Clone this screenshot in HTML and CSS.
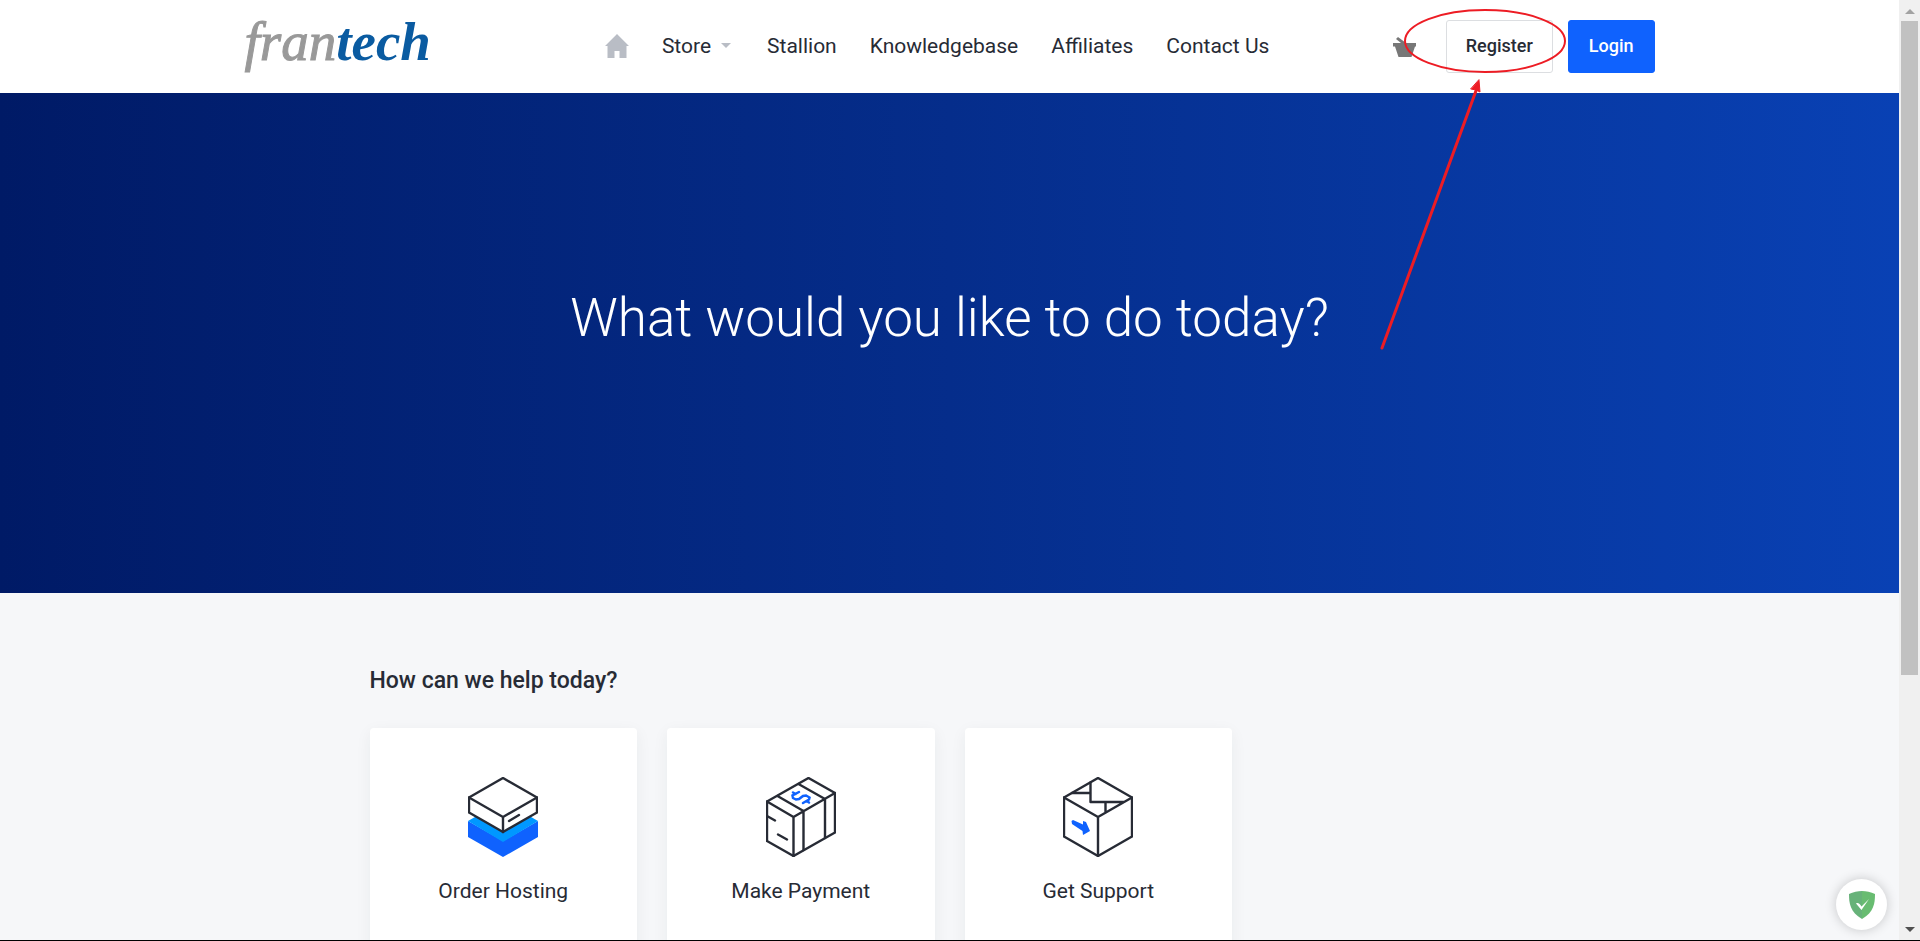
FILE: index.html
```html
<!DOCTYPE html>
<html lang="en">
<head>
<meta charset="utf-8">
<title>Frantech - Client Area</title>
<link rel="stylesheet" href="styles.css">
</head>
<body>
<div class="viewport">
  <div class="page">
    <header class="header">
      <div class="container header-row">
        <a class="logo" href="#"><span class="logo-first">fran</span><span class="logo-last">tech</span></a>
        <nav class="nav">
          <a class="nav-home" href="#" aria-label="Home">
            <svg class="icon-home" viewBox="0 0 24 24"><path d="M12 0 L24 12 H21.500 V24 H14.500 V17 H9.500 V24 H2.500 V12 H0 Z"/></svg>
          </a>
          <a class="nav-link" href="#">Store<span class="caret"></span></a>
          <a class="nav-link" href="#">Stallion</a>
          <a class="nav-link" href="#">Knowledgebase</a>
          <a class="nav-link" href="#">Affiliates</a>
          <a class="nav-link" href="#">Contact Us</a>
        </nav>
        <div class="actions">
          <a class="cart" href="#" aria-label="Cart">
            <svg class="icon-cart" viewBox="0 0 24 20"><path d="M5 0 L13 6 H23 V9.500 H22 L18.500 20 H5.500 L2 9.500 H0 V6 H8 L3 2 Z"/></svg>
          </a>
          <button class="btn btn-outline" type="button">Register</button>
          <button class="btn btn-primary" type="button">Login</button>
        </div>
      </div>
    </header>

    <section class="hero">
      <h1 class="hero-title">What would you like to do today?</h1>
    </section>

    <main class="help">
      <h2 class="help-title">How can we help today?</h2>
      <div class="cards">
        <a class="card" href="#">
          <svg class="card-icon" viewBox="0 0 70 80">
            <path fill="#0f62fe" d="M0 44 L35 64 L70 44 V60 L35 80 L0 60 Z"/>
            <path fill="#0098ff" d="M0 44 L35 24 L70 44 L35 65 Z"/>
            <path class="solid" d="M1 20.500 L35 1 L69 20.500 V35.500 L35 55 L1 35.500 Z"/>
            <path class="line" d="M1 20.500 L35 40 L69 20.500 M35 40 V55 M41 44 L51 38"/>
          </svg>
          <span class="card-label">Order Hosting</span>
        </a>
        <a class="card" href="#">
          <svg class="card-icon" viewBox="0 0 70 80">
            <path class="solid" d="M1 24.500 L42.500 1 L69 16 V55.500 L27.500 79 L1 64 Z"/>
            <path class="line" d="M1 24.500 L27.500 40 L69 16 M27.500 40 V79 M11.500 19 L37.500 34 V73 M32.500 7 L59 22 V61 M1 39 L9 43.500 M12 57.500 L21 62.500"/>
            <path class="accent" d="M27 15.500 L29.500 17 M33 15 L26.500 18.500 L27 21 L30 22.500 L33 22 L37 19 L40 18.500 L43.500 20.500 L43 22.500 L37 26 M40.500 24 L43 25.500"/>
          </svg>
          <span class="card-label">Make Payment</span>
        </a>
        <a class="card" href="#">
          <svg class="card-icon" viewBox="0 0 70 80">
            <path class="solid" d="M1 20.500 L35 1 L69 20.500 V59.500 L35 79 L1 59.500 Z"/>
            <path class="line" d="M1 20.500 L35 40 L69 20.500 M35 40 V79 M27.500 5.500 V25 H61 M27.500 16 H9 M42.500 25 V35.500"/>
            <path fill="#0f62fe" d="M10 43 L20 47.500 L20 44 L23 45 L27 54 L20 58 L19.500 54 L9 47 L8.500 44 Z"/>
          </svg>
          <span class="card-label">Get Support</span>
        </a>
      </div>
    </main>

    <button class="shield" type="button" aria-label="Protection status">
      <svg class="icon-shield" viewBox="0 0 26 28">
        <path fill="#67b279" d="M13 0 C9 0 4 1 0 3 C0 12 1 21 13 28 Z"/>
        <path fill="#68bc71" d="M13 0 C17 0 22 1 26 3 C26 12 25 21 13 28 Z"/>
        <path fill="#fff" d="M12.500 19 L7 12.500 C9 11.500 10 12 12.500 15.500 L20 8 Z"/>
      </svg>
    </button>

    <svg class="annotation" width="190" height="350" viewBox="0 0 190 350" aria-hidden="true">
      <ellipse cx="105" cy="41" rx="80" ry="31"/>
      <path d="M2 348 L97 88"/>
      <path class="arrow-head" d="M99 80 L100 92 L96 90 L91 89 Z"/>
    </svg>
  </div>
  <div class="scrollbar" aria-hidden="true">
    <span class="arrow-up"></span>
    <div class="track"><div class="thumb"></div></div>
    <span class="arrow-down"></span>
  </div>
</div>
</body>
</html>
```

FILE: styles.css
```css
* { box-sizing: border-box; }

body {
  margin: 0;
  font-family: Roboto, "Liberation Sans", sans-serif;
  color: #272b35;
}

a { color: inherit; text-decoration: none; }

.viewport {
  display: grid;
  grid-template-columns: 1fr 21px;
  height: 100vh;
  border-bottom: 1px solid #000;
}

.page {
  position: relative;
  min-width: 0;
  overflow: hidden;
  background: #f6f7f9;
}

.container {
  max-width: 1410px;
  margin: 0 auto;
}

/* Header */
.header { background: #fff; }

.header-row {
  display: flex;
  align-items: center;
  height: 93px;
}

.logo {
  margin-right: 174px;
  padding-bottom: 10px;
  font: italic 55px/60px "Liberation Serif", serif;
}
.logo-first { color: #999; -webkit-text-stroke: 1px #999; }
.logo-last { color: #0a5ba1; font-weight: 700; }

.nav {
  display: flex;
  align-items: center;
  gap: 33px;
  padding-bottom: 2px;
  font-size: 21px;
  white-space: nowrap;
}
.nav-home { display: flex; }
.nav-link { display: flex; align-items: center; }
.icon-home { width: 24px; height: 24px; fill: #b9bdc5; }
.caret {
  margin: 0 3px 0 10px;
  border: 5px solid transparent;
  border-top: 5px solid #b9bdc5;
  border-bottom: 0;
}

.actions {
  display: flex;
  align-items: center;
  margin-left: auto;
}
.cart { display: flex; margin-right: 29px; }
.icon-cart { width: 24px; height: 20px; fill: #777; }

.btn {
  height: 53px;
  padding: 0 20px 2px;
  border: 1px solid #dcdee1;
  border-radius: 3px;
  font: 500 18px/24px Roboto, sans-serif;
}
.btn-outline { margin-right: 15px; padding: 0 19px 2px; background: #fff; color: #272b35; }
.btn-primary { border-color: #0f62fe; background: #0f62fe; color: #fff; }

/* Hero */
.hero {
  display: flex;
  align-items: center;
  justify-content: center;
  height: 500px;
  padding-bottom: 50px;
  background: linear-gradient(90deg, #001a66, #052d8b 50%, #0941b4);
}
.hero-title {
  margin: 0;
  color: #fff;
  font-size: 53px;
  font-weight: 300;
  line-height: 64px;
}

/* Help */
.help {
  max-width: 1160px;
  margin: 0 auto;
  padding-top: 72px;
}
.help-title {
  margin: 0 0 31px;
  font-size: 23px;
  font-weight: 500;
  line-height: 32px;
}
.cards {
  display: grid;
  grid-template-columns: repeat(4, 1fr);
  gap: 30px;
}
.card {
  display: flex;
  flex-direction: column;
  align-items: center;
  gap: 20px;
  min-height: 240px;
  padding: 49px 24px;
  border-radius: 4px;
  background: #fff;
  box-shadow: 0 4px 16px rgba(39, 43, 53, 0.06);
}
.card-icon { width: 70px; height: 80px; }
.card-label { font-size: 21px; line-height: 28px; }
.line, .solid {
  fill: none;
  stroke: #272b35;
  stroke-width: 2.4;
  stroke-linejoin: round;
  stroke-linecap: round;
}
.solid { fill: #fff; }
.accent { fill: none; stroke: #0f62fe; stroke-width: 2.5; stroke-linecap: round; }

/* Overlays */
.shield {
  position: absolute;
  right: 12px;
  bottom: 10px;
  display: grid;
  place-items: center;
  width: 51px;
  height: 51px;
  padding: 0;
  border: 0;
  border-radius: 50%;
  background: #fff;
  box-shadow: 0 0 12px rgba(0, 0, 0, 0.2);
}
.icon-shield { width: 26px; height: 28px; }

.annotation {
  position: absolute;
  top: 0;
  left: 1380px;
  fill: none;
  stroke: #ed1c24;
  stroke-width: 2;
  stroke-linecap: round;
  pointer-events: none;
}
.annotation path { stroke-width: 3; }
.annotation .arrow-head { fill: #ed1c24; stroke-width: 1; }

/* Scrollbar */
.scrollbar {
  display: flex;
  flex-direction: column;
  align-items: center;
  padding: 9px 2px 8px;
  background: #f0f0f0;
}
.arrow-up, .arrow-down { border: 5px solid transparent; }
.arrow-up { border-top: 0; border-bottom-color: #a3a3a3; }
.arrow-down { border-bottom: 0; border-top-color: #505050; }
.track { flex: 1; width: 100%; padding: 7px 0; }
.thumb { height: 72.7%; background: #c1c1c1; }
```
